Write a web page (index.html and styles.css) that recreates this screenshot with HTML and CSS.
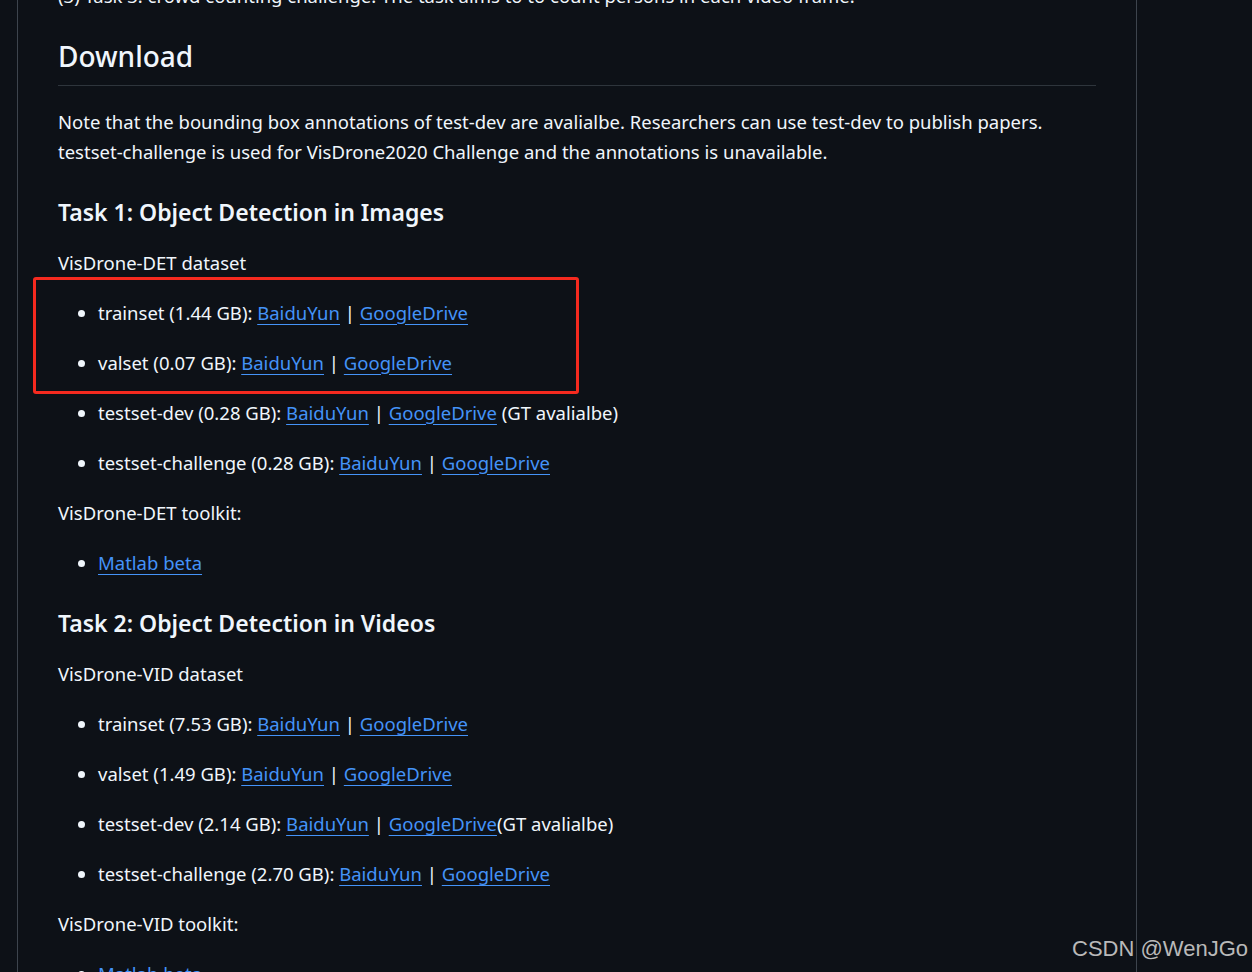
FILE: index.html
```html
<!DOCTYPE html>
<html lang="en">
<head>
<meta charset="utf-8">
<title>VisDrone Download</title>
<link rel="stylesheet" href="styles.css">
</head>
<body>
<div class="page">
  <article class="markdown-body">
    <p>(3) Task 3: crowd counting challenge. The task aims to to count persons in each video frame.</p>

    <h2>Download</h2>
    <p>Note that the bounding box annotations of test-dev are avalialbe. Researchers can use test-dev to publish papers. testset-challenge is used for VisDrone2020 Challenge and the annotations is unavailable.</p>

    <h3>Task 1: Object Detection in Images</h3>
    <p>VisDrone-DET dataset</p>
    <ul>
      <li><p>trainset (1.44 GB): <a href="#">BaiduYun</a> | <a href="#">GoogleDrive</a></p></li>
      <li><p>valset (0.07 GB): <a href="#">BaiduYun</a> | <a href="#">GoogleDrive</a></p></li>
      <li><p>testset-dev (0.28 GB): <a href="#">BaiduYun</a> | <a href="#">GoogleDrive</a> (GT avalialbe)</p></li>
      <li><p>testset-challenge (0.28 GB): <a href="#">BaiduYun</a> | <a href="#">GoogleDrive</a></p></li>
    </ul>
    <p>VisDrone-DET toolkit:</p>
    <ul>
      <li><p><a href="#">Matlab beta</a></p></li>
    </ul>

    <h3>Task 2: Object Detection in Videos</h3>
    <p>VisDrone-VID dataset</p>
    <ul>
      <li><p>trainset (7.53 GB): <a href="#">BaiduYun</a> | <a href="#">GoogleDrive</a></p></li>
      <li><p>valset (1.49 GB): <a href="#">BaiduYun</a> | <a href="#">GoogleDrive</a></p></li>
      <li><p>testset-dev (2.14 GB): <a href="#">BaiduYun</a> | <a href="#">GoogleDrive</a>(GT avalialbe)</p></li>
      <li><p>testset-challenge (2.70 GB): <a href="#">BaiduYun</a> | <a href="#">GoogleDrive</a></p></li>
    </ul>
    <p>VisDrone-VID toolkit:</p>
    <ul>
      <li><p><a href="#">Matlab beta</a></p></li>
    </ul>
  </article>
  <div class="highlight-box"></div>
</div>
<div class="watermark">CSDN @WenJGo</div>
</body>
</html>
```

FILE: styles.css
```css
html, body {
  margin: 0;
  padding: 0;
  background: #0d1117;
  height: 100%;
  overflow: hidden;
}

body {
  position: relative;
  font-family: "Noto Sans", "Open Sans", sans-serif;
  color: #f0f6fc;
}

.page {
  position: relative;
  display: flow-root;
  margin-left: 17px;
  width: 1038px;
  min-height: 100%;
  padding: 0 40px;
  border-left: 1px solid #3d444d;
  border-right: 1px solid #3d444d;
}

.markdown-body {
  font-size: 18.5px;
  line-height: 30px;
  margin-top: -19px;
}

.markdown-body p {
  margin: 0 0 20px;
}

.markdown-body h2 {
  font-size: 28px;
  line-height: 37.5px;
  font-weight: 500;
  margin: 27px 0 21px;
  padding-bottom: 9px;
  border-bottom: 1px solid #3d444db3;
}

.markdown-body h3 {
  font-size: 23px;
  line-height: 31.25px;
  font-weight: 600;
  margin: 30px 0 20px;
}

.markdown-body ul {
  margin: 0 0 20px;
  padding-left: 40px;
}

.markdown-body li > p {
  margin-top: 20px;
}

.markdown-body li + li {
  margin-top: 5px;
}

.markdown-body a {
  color: #4493f8;
  text-decoration: underline;
  text-underline-offset: 4px;
}

.highlight-box {
  position: absolute;
  left: 15px;
  top: 277px;
  width: 540px;
  height: 111px;
  border: 3px solid #f52a1f;
  border-radius: 3px;
}

.watermark {
  position: absolute;
  right: 4px;
  top: 934px;
  font-family: "Liberation Sans", Arial, sans-serif;
  font-size: 22px;
  line-height: 30px;
  color: #b9b9b9;
}
```
